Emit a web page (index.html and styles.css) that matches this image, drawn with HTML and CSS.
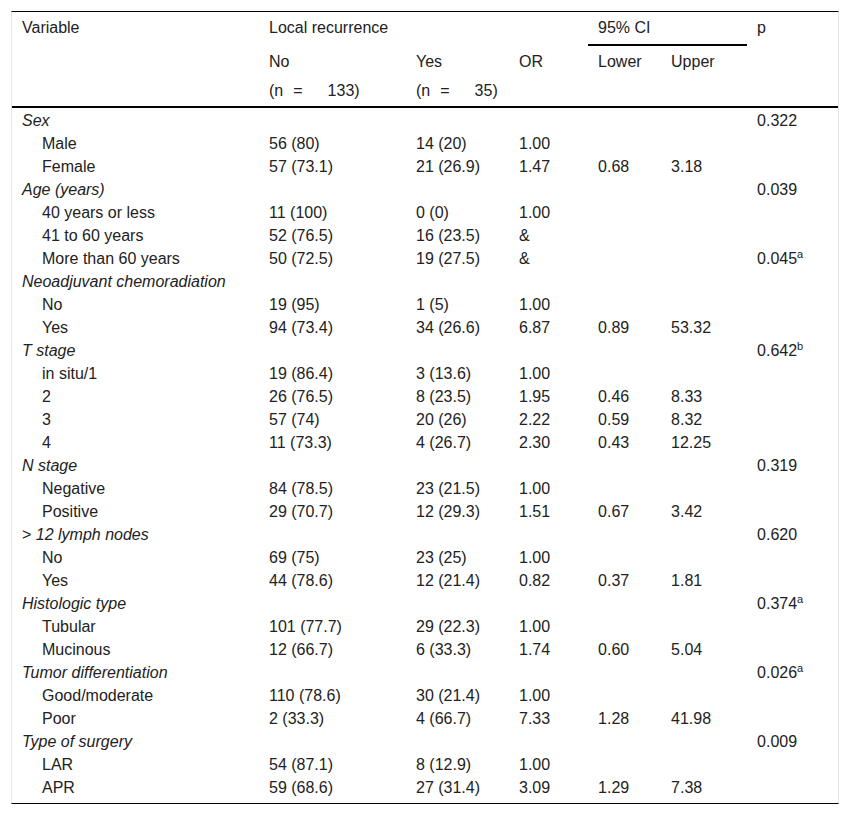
FILE: index.html
```html
<!DOCTYPE html>
<html>
<head>
<meta charset="utf-8">
<link rel="stylesheet" href="styles.css">
</head>
<body>
<div class="wrap">
<table class="tbl">
  <colgroup>
    <col class="c1"><col class="c2"><col class="c3"><col class="c4"><col class="c5"><col class="c6"><col class="c7">
  </colgroup>
  <thead>
    <tr class="h1">
      <th rowspan="3">Variable</th>
      <th colspan="3">Local recurrence</th>
      <th colspan="2" class="ci">95% CI</th>
      <th rowspan="3">p</th>
    </tr>
    <tr class="h2">
      <th>No</th><th>Yes</th><th>OR</th><th>Lower</th><th>Upper</th>
    </tr>
    <tr class="h3">
      <th><span class="n">(n</span><span class="eq">=</span>133)</th>
      <th><span class="n">(n</span><span class="eq">=</span>35)</th>
      <th></th><th></th><th></th>
    </tr>
  </thead>
  <tbody>
    <tr class="first"><td class="cat">Sex</td><td></td><td></td><td></td><td></td><td></td><td>0.322</td></tr>
    <tr><td class="sub">Male</td><td>56 (80)</td><td>14 (20)</td><td>1.00</td><td></td><td></td><td></td></tr>
    <tr><td class="sub">Female</td><td>57 (73.1)</td><td>21 (26.9)</td><td>1.47</td><td>0.68</td><td>3.18</td><td></td></tr>
    <tr><td class="cat">Age (years)</td><td></td><td></td><td></td><td></td><td></td><td>0.039</td></tr>
    <tr><td class="sub">40 years or less</td><td>11 (100)</td><td>0 (0)</td><td>1.00</td><td></td><td></td><td></td></tr>
    <tr><td class="sub">41 to 60 years</td><td>52 (76.5)</td><td>16 (23.5)</td><td>&amp;</td><td></td><td></td><td></td></tr>
    <tr><td class="sub">More than 60 years</td><td>50 (72.5)</td><td>19 (27.5)</td><td>&amp;</td><td></td><td></td><td>0.045<sup>a</sup></td></tr>
    <tr><td class="cat">Neoadjuvant chemoradiation</td><td></td><td></td><td></td><td></td><td></td><td></td></tr>
    <tr><td class="sub">No</td><td>19 (95)</td><td>1 (5)</td><td>1.00</td><td></td><td></td><td></td></tr>
    <tr><td class="sub">Yes</td><td>94 (73.4)</td><td>34 (26.6)</td><td>6.87</td><td>0.89</td><td>53.32</td><td></td></tr>
    <tr><td class="cat">T stage</td><td></td><td></td><td></td><td></td><td></td><td>0.642<sup>b</sup></td></tr>
    <tr><td class="sub">in situ/1</td><td>19 (86.4)</td><td>3 (13.6)</td><td>1.00</td><td></td><td></td><td></td></tr>
    <tr><td class="sub">2</td><td>26 (76.5)</td><td>8 (23.5)</td><td>1.95</td><td>0.46</td><td>8.33</td><td></td></tr>
    <tr><td class="sub">3</td><td>57 (74)</td><td>20 (26)</td><td>2.22</td><td>0.59</td><td>8.32</td><td></td></tr>
    <tr><td class="sub">4</td><td>11 (73.3)</td><td>4 (26.7)</td><td>2.30</td><td>0.43</td><td>12.25</td><td></td></tr>
    <tr><td class="cat">N stage</td><td></td><td></td><td></td><td></td><td></td><td>0.319</td></tr>
    <tr><td class="sub">Negative</td><td>84 (78.5)</td><td>23 (21.5)</td><td>1.00</td><td></td><td></td><td></td></tr>
    <tr><td class="sub">Positive</td><td>29 (70.7)</td><td>12 (29.3)</td><td>1.51</td><td>0.67</td><td>3.42</td><td></td></tr>
    <tr><td class="cat"><span class="up">&gt; </span>12 lymph nodes</td><td></td><td></td><td></td><td></td><td></td><td>0.620</td></tr>
    <tr><td class="sub">No</td><td>69 (75)</td><td>23 (25)</td><td>1.00</td><td></td><td></td><td></td></tr>
    <tr><td class="sub">Yes</td><td>44 (78.6)</td><td>12 (21.4)</td><td>0.82</td><td>0.37</td><td>1.81</td><td></td></tr>
    <tr><td class="cat">Histologic type</td><td></td><td></td><td></td><td></td><td></td><td>0.374<sup>a</sup></td></tr>
    <tr><td class="sub">Tubular</td><td>101 (77.7)</td><td>29 (22.3)</td><td>1.00</td><td></td><td></td><td></td></tr>
    <tr><td class="sub">Mucinous</td><td>12 (66.7)</td><td>6 (33.3)</td><td>1.74</td><td>0.60</td><td>5.04</td><td></td></tr>
    <tr><td class="cat">Tumor differentiation</td><td></td><td></td><td></td><td></td><td></td><td>0.026<sup>a</sup></td></tr>
    <tr><td class="sub">Good/moderate</td><td>110 (78.6)</td><td>30 (21.4)</td><td>1.00</td><td></td><td></td><td></td></tr>
    <tr><td class="sub">Poor</td><td>2 (33.3)</td><td>4 (66.7)</td><td>7.33</td><td>1.28</td><td>41.98</td><td></td></tr>
    <tr><td class="cat">Type of surgery</td><td></td><td></td><td></td><td></td><td></td><td>0.009</td></tr>
    <tr><td class="sub">LAR</td><td>54 (87.1)</td><td>8 (12.9)</td><td>1.00</td><td></td><td></td><td></td></tr>
    <tr class="last"><td class="sub">APR</td><td>59 (68.6)</td><td>27 (31.4)</td><td>3.09</td><td>1.29</td><td>7.38</td><td></td></tr>
  </tbody>
</table>
</div>
</body>
</html>
```

FILE: styles.css
```css
html, body {
  margin: 0;
  padding: 0;
  background: #fff;
}
.wrap {
  padding: 11px 0 0 11px;
}
.tbl {
  width: 828px;
  table-layout: fixed;
  border-collapse: separate;
  border-spacing: 0;
  border-top: 1px solid #000;
  border-bottom: 1px solid #000;
  border-left: 1px solid #e6e6e6;
  border-right: 1px solid #e6e6e6;
  font-family: "Liberation Sans", Arial, sans-serif;
  font-size: 16px;
  line-height: 18px;
  color: #222;
}
.c1 { width: 247px; }
.c2 { width: 147px; }
.c3 { width: 103px; }
.c4 { width: 79px; }
.c5 { width: 73px; }
.c6 { width: 86px; }
.c7 { width: 91px; }
.tbl th {
  font-weight: normal;
  text-align: left;
  vertical-align: top;
  padding: 0 0 0 10px;
  white-space: nowrap;
}
.h1 th { padding-top: 7px; padding-bottom: 7px; }
.h1 th.ci {
  border-bottom: 2px solid #000;
}
.h2 th { padding-top: 7px; padding-bottom: 6px; }
.h3 th { padding-top: 5px; padding-bottom: 6px; }
.n { margin-right: 10px; }
.eq { margin-right: 25px; }
.tbl td {
  padding: 4px 0 1px 10px;
  text-align: left;
  vertical-align: top;
  white-space: nowrap;
}
.tbl tr.first td {
  border-top: 2px solid #000;
}
.tbl tr.last td {
  padding-bottom: 6px;
}
.tbl td.cat {
  font-style: italic;
}
.tbl td.cat .up {
  font-style: normal;
}
.tbl td.sub {
  padding-left: 30px;
}
sup {
  font-size: 11px;
  line-height: 0;
  vertical-align: 6px;
}
```
